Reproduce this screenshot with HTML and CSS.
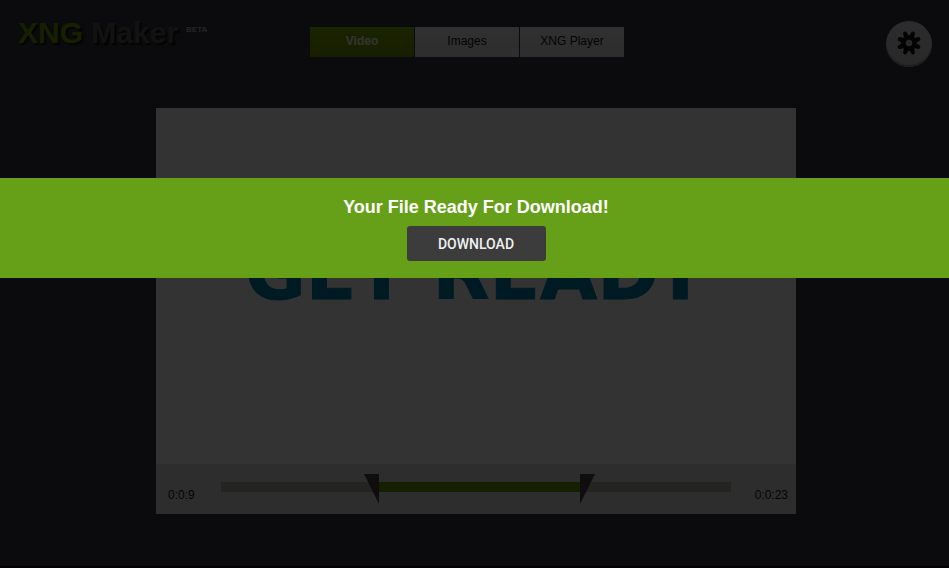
FILE: index.html
```html
<!DOCTYPE html>
<html lang="en">
<head>
<meta charset="utf-8">
<title>XNG Maker</title>
<meta name="viewport" content="width=device-width, initial-scale=1">
<link rel="stylesheet" href="styles.css">
</head>
<body>
<div class="page">
  <header class="header">
    <h1 class="logo"><span class="logo-accent">XNG</span> Maker<sup class="logo-tag">BETA</sup></h1>
    <nav class="tabs">
      <a class="tab tab-active" href="#video">Video</a>
      <a class="tab" href="#images">Images</a>
      <a class="tab" href="#player">XNG Player</a>
    </nav>
    <button class="settings" type="button" aria-label="Settings">
      <svg class="gear" viewBox="-12 -12 24 24" aria-hidden="true">
        <defs><path id="tooth" d="M-2.8-5-1.9-10.9Q-1.7-12-.8-12H.8Q1.7-12 1.9-10.9L2.8-5Z"/></defs>
        <g fill="#111">
          <use href="#tooth" transform="rotate(22.5)"/>
          <use href="#tooth" transform="rotate(67.5)"/>
          <use href="#tooth" transform="rotate(112.5)"/>
          <use href="#tooth" transform="rotate(157.5)"/>
          <use href="#tooth" transform="rotate(202.5)"/>
          <use href="#tooth" transform="rotate(247.5)"/>
          <use href="#tooth" transform="rotate(292.5)"/>
          <use href="#tooth" transform="rotate(337.5)"/>
          <circle r="7.8"/>
        </g>
        <circle r="3.3" fill="#c8c8c8"/>
      </svg>
    </button>
  </header>
  <main class="stage">
    <div class="editor">
      <div class="video">GET READY</div>
      <div class="controls">
        <span class="time">0:0:9</span>
        <div class="trim" style="--from:30.98%;--to:70.39%">
          <input class="handle handle-start" type="range" min="0" max="495" value="143" aria-label="Start time">
          <input class="handle handle-end" type="range" min="0" max="495" value="359" aria-label="End time">
        </div>
        <span class="time time-end">0:0:23</span>
      </div>
    </div>
  </main>
</div>
<div class="overlay">
  <section class="banner" role="dialog" aria-labelledby="banner-title">
    <h2 class="banner-title" id="banner-title">Your File Ready For Download!</h2>
    <button class="download" type="button">DOWNLOAD</button>
  </section>
</div>
</body>
</html>
```
FILE: styles.css
```css
* {
  box-sizing: border-box;
}

body {
  margin: 0;
  font-family: "Liberation Sans", Arial, sans-serif;
  font-size: 12px;
  color: #111;
  background: #373741;
}

.page {
  min-height: 100vh;
  border-bottom: 2px solid #0f0005;
}

.header {
  display: grid;
  grid-template-columns: 1fr auto 1fr;
  align-items: start;
  height: 108px;
  padding: 14px 15px 0 0;
}

.logo {
  display: flex;
  align-items: flex-start;
  margin: 0 0 0 18px;
  font-size: 30px;
  line-height: 38px;
  white-space: pre;
  color: #5a5a5a;
  text-shadow: 2px 2px 1px #14140f;
}

.logo-accent {
  color: #6ea000;
}

.logo-tag {
  margin-left: 8px;
  font-size: 8px;
  line-height: 32px;
  color: #b4b4b4;
  text-shadow: none;
}

.tabs {
  display: grid;
  grid-template-columns: repeat(3, 104px);
  gap: 1px;
  margin-top: 13px;
}

.tab {
  height: 30px;
  line-height: 28px;
  text-align: center;
  text-decoration: none;
  color: #111;
  background: linear-gradient(#f0f0f0, #e1e1e1);
}

.tab-active {
  font-weight: bold;
  color: #fff;
  background: linear-gradient(#82b400, #739600);
}

.settings {
  display: grid;
  place-items: center;
  justify-self: end;
  width: 46px;
  height: 46px;
  margin: 7px 2px 0 0;
  padding: 0 0 2px;
  border: 0;
  border-radius: 50%;
  background: linear-gradient(#dcdcdc, #c8c8c8);
  box-shadow: inset 0 -2px 1px #969696;
}

.gear {
  width: 24px;
  height: 24px;
}

.stage {
  padding-left: 3px;
}

.editor {
  max-width: 640px;
  margin: 0 auto;
}

.video {
  display: grid;
  place-items: center;
  height: 356px;
  padding-bottom: 26px;
  font-family: "DejaVu Sans", Verdana, sans-serif;
  font-size: 74px;
  font-weight: bold;
  white-space: nowrap;
  color: #0082af;
  background: #fff;
  -webkit-text-stroke: 1px #0082af;
}

.controls {
  display: flex;
  height: 50px;
  padding: 10px 8px 10px 12px;
  background: #e1e1e1;
}

.time {
  width: 53px;
  line-height: 42px;
}

.time-end {
  width: 57px;
  text-align: right;
}

.trim {
  position: relative;
  flex: 1;
  height: 10px;
  margin-top: 8px;
  background: linear-gradient(90deg, #b4b4aa var(--from), #6ea000 var(--from) var(--to), #b4b4aa var(--to));
}

.handle {
  position: absolute;
  top: -8px;
  left: 0;
  width: 100%;
  height: 30px;
  margin: 0;
  appearance: none;
  background: none;
  pointer-events: none;
}

.handle::-webkit-slider-thumb {
  appearance: none;
  width: 15px;
  height: 30px;
  background: #4b4146;
  pointer-events: auto;
}

.handle-start::-webkit-slider-thumb {
  clip-path: polygon(0 0, 100% 0, 100% 100%);
}

.handle-end::-webkit-slider-thumb {
  clip-path: polygon(0 0, 100% 0, 0 100%);
}

.overlay {
  position: fixed;
  inset: 0;
  padding-top: 178px;
  background: rgba(0, 0, 0, .8);
}

.banner {
  display: flex;
  flex-direction: column;
  align-items: center;
  gap: 8px;
  height: 100px;
  padding: 18px 0 0 3px;
  background: #669f18;
}

.banner-title {
  margin: 0;
  font-size: 18px;
  line-height: 22px;
  color: #fff;
}

.download {
  min-width: 139px;
  height: 35px;
  padding: 0 16px;
  border: 0;
  border-radius: 3px;
  font-family: Roboto, sans-serif;
  font-size: 14px;
  font-weight: 500;
  color: #f0f0f0;
  background: #3c3c3c;
}
```
